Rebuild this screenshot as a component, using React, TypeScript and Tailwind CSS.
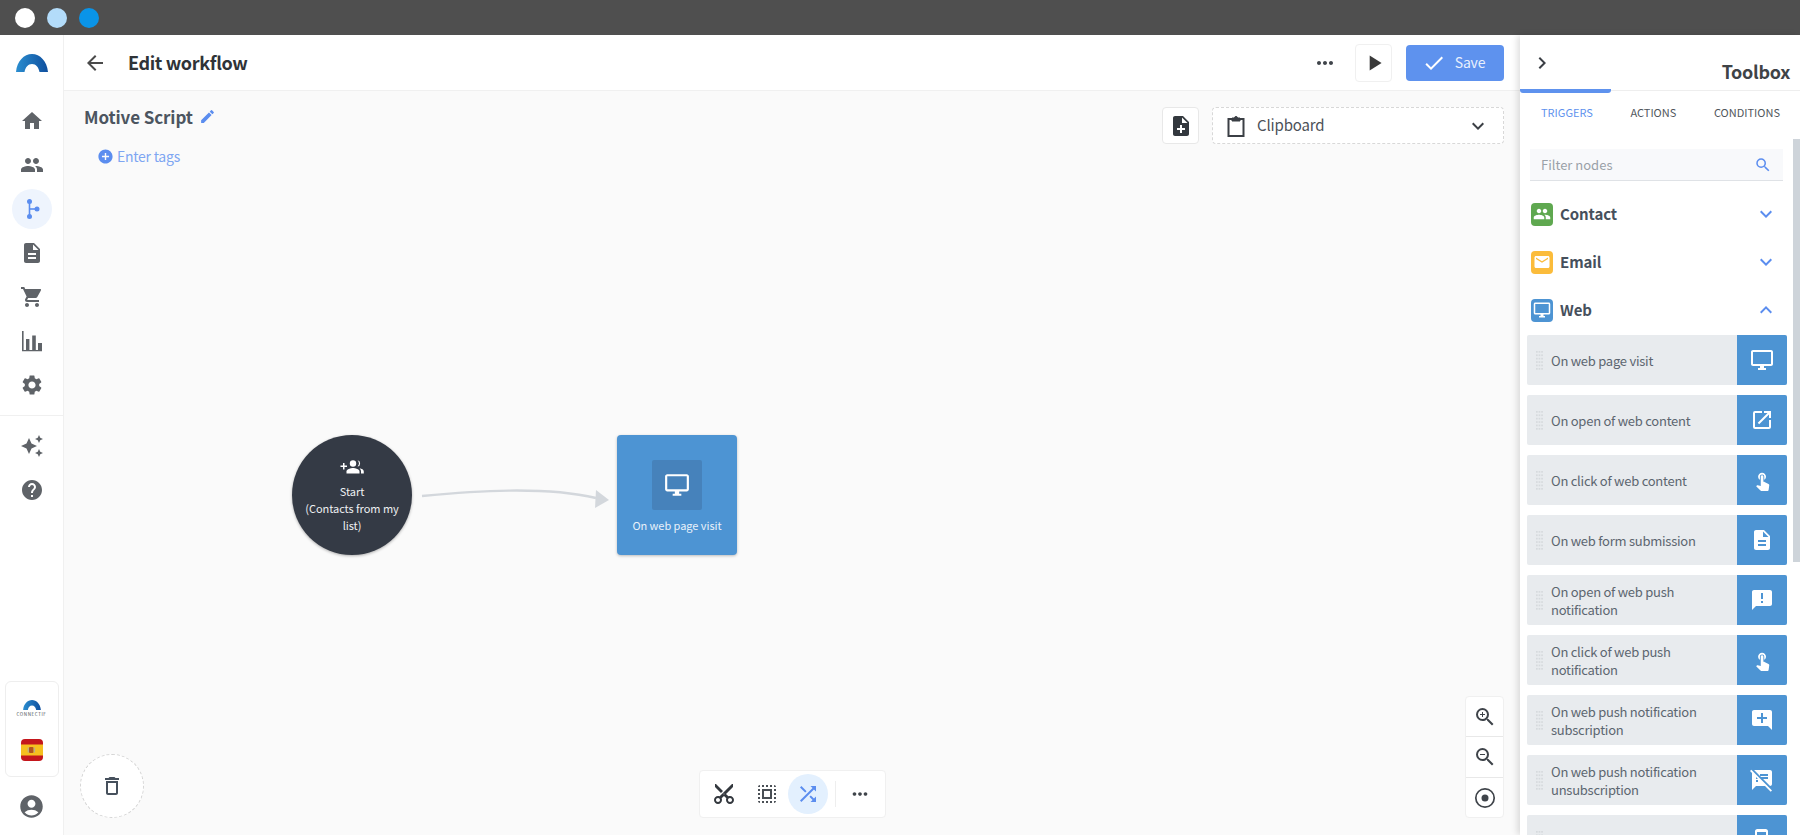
import React from "react";
import {
  MdHome, MdPeople, MdDescription, MdShoppingCart, MdSettings, MdAutoAwesome, MdHelp, MdAccountCircle,
  MdOutlineDelete, MdArrowBack, MdEdit, MdAddCircle, MdMoreHoriz, MdPlayArrow, MdCheck, MdChevronRight,
  MdKeyboardArrowDown, MdKeyboardArrowUp, MdNoteAdd, MdSearch, MdOutlineDesktopWindows, MdOpenInNew, MdTouchApp,
  MdAnnouncement, MdAddComment, MdSpeakerNotesOff, MdContentCut, MdOutlineSelectAll, MdShuffle,
  MdZoomIn, MdZoomOut, MdEmail, MdPhoneIphone,
} from "react-icons/md";

const Logo = ({ w, h }: { w: number; h: number }) => (
  <svg width={w} height={h} viewBox="0 0 32 18">
    <defs>
      <linearGradient id="lg" x1="0" x2="1" y1="0" y2="0">
        <stop offset="0" stopColor="#2b8ed0" />
        <stop offset="1" stopColor="#0f4f9e" />
      </linearGradient>
    </defs>
    <path d="M0 18C1 7 8 0 16 0s15 7 16 18H23.500C22.500 13 20 10 16 10s-6.500 3-7.500 8Z" fill="url(#lg)" />
  </svg>
);

const Workflow = () => (
  <svg width="24" height="24" viewBox="0 0 24 24" fill="#5b8def">
    <circle cx="9.500" cy="4.500" r="2.500" />
    <circle cx="9.500" cy="19.500" r="2.500" />
    <circle cx="17" cy="12" r="2.500" />
    <path d="M8.700 4h1.600v16H8.700z" />
    <path d="M9 11.200h8v1.600H9z" />
  </svg>
);

const Bars = () => (
  <svg width="24" height="24" viewBox="0 0 24 24" fill="#5f6368">
    <path d="M2 2h1.600v19H2zM2 21h20v1.200H2zM6 10h3.400v11H6zM12.200 6.500h3.600V21h-3.600zM18 14h4v7h-4z" />
  </svg>
);

const ClipboardIcon = () => (
  <svg width="24" height="26" viewBox="0 0 24 26" fill="none" stroke="#3b3f45" strokeWidth="2">
    <path d="M8 6H4.500v17h15V6H16" />
    <path d="M8 8V5h2.500a1.500 1.500 0 0 1 3 0H16v3z" fill="#3b3f45" strokeWidth="1" />
  </svg>
);

const GroupPlus = () => (
  <svg width="24" height="24" viewBox="0 0 24 24" fill="#ffffff">
    <path d="M0.500 10.500h2.500V8h1.500v2.500H7V12H4.500v2.500H3V12H0.500z" />
    <circle cx="13" cy="8.500" r="3.200" />
    <path d="M6.500 18.500v-2c0-2.200 4.300-3.400 6.500-3.400s6.500 1.200 6.500 3.400v2z" />
    <path d="M17.500 5.300a3.200 3.200 0 0 1 0 6.300 4.600 4.600 0 0 0 0-6.300z" />
    <path d="M19.500 13.300c2.300.4 4.300 1.400 4.300 3.200v2h-2.800v-2c0-1.300-.6-2.400-1.500-3.200z" />
  </svg>
);

const Target = () => (
  <svg width="24" height="24" viewBox="0 0 24 24" fill="none" stroke="#3f444a" strokeWidth="1.700">
    <circle cx="12" cy="12" r="9.200" />
    <circle cx="12" cy="12" r="3.500" fill="#3f444a" stroke="none" />
  </svg>
);

const Flag = () => (
  <svg width="22" height="22" viewBox="0 0 22 22">
    <rect width="22" height="22" rx="4" fill="#c4161c" />
    <rect y="5.500" width="22" height="11" fill="#f5bf1f" />
    <rect x="8" y="8" width="4.500" height="6" rx="1" fill="#b3541e" />
    <rect x="6.700" y="8.500" width="1" height="5" fill="#a8a8a8" />
    <rect x="12.800" y="8.500" width="1" height="5" fill="#a8a8a8" />
  </svg>
);

const Grip = () => (
  <svg width="7" height="19" viewBox="0 0 7 19" fill="#d6dadd" className="shrink-0">
    {[0, 1, 2, 3, 4, 5].map((r) => (
      <g key={r}>
        <rect x="0" y={r * 3.400} width="1.700" height="1.700" />
        <rect x="2.600" y={r * 3.400} width="1.700" height="1.700" />
        <rect x="5.200" y={r * 3.400} width="1.700" height="1.700" />
      </g>
    ))}
  </svg>
);

const navTop = [
  { I: MdHome },
  { I: MdPeople },
  { active: true },
  { I: MdDescription },
  { I: MdShoppingCart },
  { bars: true },
  { I: MdSettings },
];

const rows: { t: string; s: number; I: React.ComponentType<{ size?: number; color?: string }> }[] = [
  { t: "On web page visit", s: 24, I: MdOutlineDesktopWindows },
  { t: "On open of web content", s: 24, I: MdOpenInNew },
  { t: "On click of web content", s: 21, I: MdTouchApp },
  { t: "On web form submission", s: 24, I: MdDescription },
  { t: "On open of web push notification", s: 24, I: MdAnnouncement },
  { t: "On click of web push notification", s: 21, I: MdTouchApp },
  { t: "On web push notification subscription", s: 24, I: MdAddComment },
  { t: "On web push notification unsubscription", s: 24, I: MdSpeakerNotesOff },
  { t: "", s: 24, I: MdPhoneIphone },
];

const Section = ({ name, bg, icon, open }: { name: string; bg: string; icon: React.ReactNode; open?: boolean }) => (
  <div className="flex h-[48px] items-center pl-[11px] pr-[22px]">
    <div className={`flex h-[23px] w-[22px] items-center justify-center rounded-[4px] ${bg}`}>{icon}</div>
    <span className="ml-[7px] flex-1 text-[15px] font-bold tracking-[-0.1px] text-[#46505c]">{name}</span>
    {open ? <MdKeyboardArrowUp size={24} color="#5b8def" /> : <MdKeyboardArrowDown size={24} color="#5b8def" />}
  </div>
);

export default function App() {
  return (
    <div className="flex h-[835px] w-[1800px] flex-col overflow-hidden bg-white font-['Noto_Sans_CJK_SC','Noto_Sans',sans-serif]">
      <div className="flex h-[35px] shrink-0 items-center gap-[12px] bg-[#4f4f4f] pl-[15px]">
        <div className="h-5 w-5 rounded-full bg-white" />
        <div className="h-5 w-5 rounded-full bg-[#b3dcfa]" />
        <div className="h-5 w-5 rounded-full bg-[#0a94e8]" />
      </div>

      <div className="flex min-h-0 flex-1">
        {/* Sidebar */}
        <aside className="flex w-[64px] shrink-0 flex-col items-center border-r border-[#f0f0f0] bg-white">
          <div className="flex h-[56px] w-full items-center justify-center">
            <Logo w={32} h={18} />
          </div>
          <nav className="mt-[10px] flex flex-col items-center gap-[4px]">
            {navTop.map((n, i) => (
              <div
                key={i}
                className={`flex h-10 w-10 items-center justify-center rounded-full ${n.active ? "bg-[#eef4fd]" : ""}`}
              >
                {n.active ? <Workflow /> : n.bars ? <Bars /> : n.I ? <n.I size={24} color="#5f6368" /> : null}
              </div>
            ))}
          </nav>
          <div className="mt-[10px] h-px w-full bg-[#f0f0f0]" />
          <div className="mt-[10px] flex flex-col items-center gap-[4px]">
            <div className="flex h-10 w-10 items-center justify-center">
              <MdAutoAwesome size={24} color="#5f6368" />
            </div>
            <div className="flex h-10 w-10 items-center justify-center">
              <MdHelp size={24} color="#5f6368" />
            </div>
          </div>
          <div className="mt-auto flex h-[96px] w-[54px] flex-col items-center rounded-[6px] border border-[#eeeeee] pt-[18px]">
            <Logo w={18} h={10} />
            <span className="mt-[1px] text-[4.500px] leading-[7px] tracking-[0.6px] text-[#4a4f55]">CONNECTIF</span>
            <div className="mt-[21px]"><Flag /></div>
          </div>
          <div className="mb-[15px] mt-[15px] flex h-[28px] items-center justify-center">
            <MdAccountCircle size={27} color="#5f6368" />
          </div>
        </aside>

        {/* Main */}
        <main className="flex min-w-0 flex-1 flex-col">
          <header className="flex h-[56px] shrink-0 items-center border-b border-[#f0f0f0] pl-[19px] pr-[16px]">
            <MdArrowBack size={24} color="#4a4a4a" />
            <h1 className="ml-[21px] flex-1 text-[18px] font-semibold tracking-[-0.35px] text-[#2f3338]">Edit workflow</h1>
            <MdMoreHoriz size={24} color="#3f444a" />
            <div className="ml-[18px] flex h-[38px] w-[37px] items-center justify-center rounded-[4px] border border-[#f0f0f0]">
              <MdPlayArrow size={26} color="#3a3a3a" />
            </div>
            <button className="ml-[14px] flex h-[36px] w-[98px] items-center justify-center gap-[9px] rounded-[4px] bg-[#5e92ee] pr-[3px] text-[14px] tracking-[-0.2px] text-[#e8f0fd]">
              <MdCheck size={24} color="#ffffff" />
              Save
            </button>
          </header>

          <div className="relative min-h-0 flex-1 bg-[#fafafa]">
            <div className="flex items-start justify-between pl-[20px] pr-[16px] pt-[16px]">
              <div className="-mt-[3px]">
                <div className="flex items-center gap-[6px]">
                  <span className="text-[17px] font-semibold tracking-[-0.1px] text-[#4c5560]">Motive Script</span>
                  <MdEdit size={17} color="#5b8def" />
                </div>
                <div className="ml-[13px] mt-[16px] flex items-center gap-[3px] text-[14px] tracking-[-0.25px] text-[#7ea6f2]">
                  <MdAddCircle size={17} color="#5b8def" />
                  Enter tags
                </div>
              </div>
              <div className="flex items-center gap-[13px]">
                <div className="flex h-[37px] w-[37px] items-center justify-center rounded-[4px] border border-[#e8e8e8] bg-white">
                  <MdNoteAdd size={24} color="#33383e" />
                </div>
                <div className="flex h-[37px] w-[292px] items-center rounded-[4px] border border-dashed border-[#d8d8d8] bg-white pl-[11px] pr-[13px]">
                  <ClipboardIcon />
                  <span className="ml-[9px] flex-1 text-[15px] tracking-[-0.15px] text-[#4c5158]">Clipboard</span>
                  <MdKeyboardArrowDown size={24} color="#3b3f45" />
                </div>
              </div>
            </div>

            {/* Nodes on the canvas */}
            <div className="absolute left-[228px] top-[344px] flex h-[120px] w-[120px] flex-col items-center rounded-full bg-[#343a45] pt-[20px] text-center text-[11px] leading-[17px] tracking-[-0.05px] text-[#eef0f2] shadow-[0_1px_3px_rgba(0,0,0,0.3)]">
              <GroupPlus />
              <span className="mt-[4px] w-[100px]">Start<br />(Contacts from my list)</span>
            </div>
            <svg className="absolute left-[350px] top-[380px]" width="210" height="40" viewBox="0 0 210 40">
              <path d="M8 25C60 20 130 15 182 27" fill="none" stroke="#d3d7dc" strokeWidth="2.500" />
              <path d="M182 19L195 29L181 37Z" fill="#d3d7dc" />
            </svg>
            <div className="absolute left-[553px] top-[344px] flex h-[120px] w-[120px] flex-col items-center rounded-[4px] bg-[#4d94d3] pt-[25px] shadow-[0_1px_3px_rgba(0,0,0,0.25)]">
              <div className="flex h-[50px] w-[50px] items-center justify-center rounded-[2px] bg-[#4682bb]">
                <MdOutlineDesktopWindows size={26} color="#ffffff" />
              </div>
              <span className="mt-[6px] text-[11px] leading-[18px] tracking-[-0.05px] text-[#e8f1fa]">On web page visit</span>
            </div>

            {/* Overlays */}
            <div className="absolute bottom-[17px] left-[16px] flex h-[64px] w-[64px] items-center justify-center rounded-full border border-dashed border-[#d4d4d4] bg-white">
              <MdOutlineDelete size={24} color="#46505c" />
            </div>
            <div className="absolute bottom-[17px] left-[635px] flex h-[48px] w-[187px] items-center rounded-[4px] border border-[#f0f0f0] bg-white">
              <div className="flex w-[48px] justify-center"><MdContentCut size={24} color="#33383e" className="-rotate-90" /></div>
              <div className="-ml-[3px] flex w-[43px] justify-center"><MdOutlineSelectAll size={24} color="#4a4f55" /></div>
              <div className="flex h-[40px] w-[40px] items-center justify-center rounded-full bg-[#e3f0fe]"><MdShuffle size={24} color="#5b8def" /></div>
              <div className="ml-[7px] h-[26px] w-px bg-[#eeeeee]" />
              <div className="ml-[13px]"><MdMoreHoriz size={22} color="#3f444a" /></div>
            </div>
            <div className="absolute bottom-[17px] right-[16px] flex w-[39px] flex-col rounded-[4px] border border-[#f0f0f0] bg-white">
              <div className="flex h-[40px] items-center justify-center border-b border-[#e8e8e8]"><MdZoomIn size={24} color="#3f444a" /></div>
              <div className="flex h-[41px] items-center justify-center border-b border-[#e8e8e8]"><MdZoomOut size={24} color="#3f444a" /></div>
              <div className="flex h-[39px] items-center justify-center"><Target /></div>
            </div>
          </div>
        </main>

        {/* Toolbox */}
        <aside className="relative flex w-[280px] shrink-0 flex-col bg-white shadow-[-3px_0_6px_rgba(0,0,0,0.12)]">
          <div className="relative h-[56px] shrink-0 border-b border-[#eeeeee]">
            <div className="absolute left-[10px] top-[16px]"><MdChevronRight size={24} color="#3b3f45" /></div>
            <div className="absolute right-[10px] top-[22px] text-[18px] font-semibold leading-[28px] tracking-[-0.3px] text-[#3f4347]">Toolbox</div>
            <div className="absolute -bottom-[3px] left-0 h-[4px] w-[91px] rounded-b-[3px] bg-[#5e92ee]" />
          </div>
          <div className="flex h-[43px] shrink-0 items-center justify-between pl-[21px] pr-[20px] text-[11px] text-[#50565c]">
            <span className="text-[#5e92ee]">TRIGGERS</span>
            <span>ACTIONS</span>
            <span>CONDITIONS</span>
          </div>
          <div className="relative min-h-0 flex-1 overflow-hidden">
            <div className="absolute right-0 top-[5px] h-[423px] w-[7px] bg-[#ced4da]" />
            <div className="mx-[10px] mt-[15px] flex h-[32px] w-[253px] items-center justify-between border-b border-[#dfe2e6] bg-[#f8f9fb] pl-[11px] pr-[11px] text-[13px] text-[#9aa1a8]">
              <span>Filter nodes</span>
              <MdSearch size={18} color="#5b8def" />
            </div>
            <div className="mt-[9px]">
              <Section name="Contact" bg="bg-[#5fa850]" icon={<MdPeople size={18} color="#ffffff" />} />
              <Section name="Email" bg="bg-[#fbbc3b]" icon={<MdEmail size={18} color="#ffffff" />} />
              <Section name="Web" bg="bg-[#4d94d3]" icon={<MdOutlineDesktopWindows size={18} color="#ffffff" />} open />
            </div>
            <div className="ml-[7px] mt-[1px] flex w-[260px] flex-col gap-[10px]">
              {rows.map((r, i) => (
                <div key={i} className="flex h-[50px] shrink-0 items-stretch overflow-hidden rounded-[2px] bg-[#e8ebee]">
                  <div className="flex min-w-0 flex-1 items-center pl-[9px] pr-[8px]">
                    <Grip />
                    <span className="ml-[8px] pt-[1px] text-[13px] leading-[18px] tracking-[-0.25px] text-[#5c6670]">{r.t}</span>
                  </div>
                  <div className="flex w-[50px] shrink-0 items-center justify-center bg-[#4d94d3]">
                    <r.I size={r.s} color="#ffffff" />
                  </div>
                </div>
              ))}
            </div>
          </div>
        </aside>
      </div>
    </div>
  );
}
